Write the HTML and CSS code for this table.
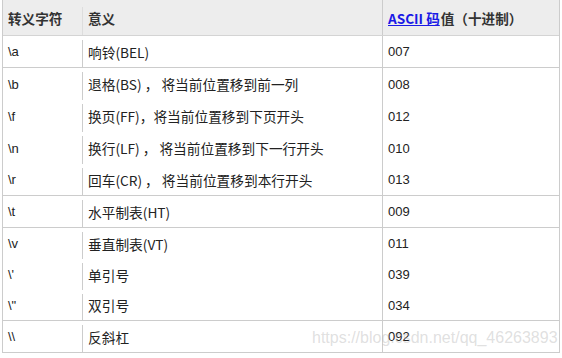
FILE: index.html
```html
<!DOCTYPE html>
<html lang="zh-CN">
<head>
    <meta charset="UTF-8">
    <title>转义字符</title>
    <link rel="stylesheet" href="styles.css">
</head>
<body>
    <div class="table">
        <div class="row head">
            <div class="c1">转义字符</div>
            <div class="sep"></div>
            <div class="c2">意义</div>
            <div class="c3"><a href="#">ASCII 码</a>值（十进制）</div>
        </div>
        <div class="row line">
            <div class="c1">\a</div><div class="sep"></div>
            <div class="c2">响铃(BEL)</div><div class="c3 num">007</div>
        </div>
        <div class="row">
            <div class="c1">\b</div><div class="sep"></div>
            <div class="c2">退格(BS) ， 将当前位置移到前一列</div><div class="c3 num">008</div>
        </div>
        <div class="row">
            <div class="c1">\f</div><div class="sep"></div>
            <div class="c2">换页(FF)，将当前位置移到下页开头</div><div class="c3 num">012</div>
        </div>
        <div class="row">
            <div class="c1">\n</div><div class="sep"></div>
            <div class="c2">换行(LF) ， 将当前位置移到下一行开头</div><div class="c3 num">010</div>
        </div>
        <div class="row line">
            <div class="c1">\r</div><div class="sep"></div>
            <div class="c2">回车(CR) ， 将当前位置移到本行开头</div><div class="c3 num">013</div>
        </div>
        <div class="row line">
            <div class="c1">\t</div><div class="sep"></div>
            <div class="c2">水平制表(HT)</div><div class="c3 num">009</div>
        </div>
        <div class="row short">
            <div class="c1">\v</div><div class="sep"></div>
            <div class="c2">垂直制表(VT)</div><div class="c3 num">011</div>
        </div>
        <div class="row short">
            <div class="c1">\'</div><div class="sep"></div>
            <div class="c2">单引号</div><div class="c3 num">039</div>
        </div>
        <div class="row short line">
            <div class="c1">\"</div><div class="sep"></div>
            <div class="c2">双引号</div><div class="c3 num">034</div>
        </div>
        <div class="row line">
            <div class="c1">\\</div><div class="sep"></div>
            <div class="c2">反斜杠</div><div class="c3 num">092</div>
        </div>
        <div class="mark">https://blog.csdn.net/qq_46263893</div>
    </div>
</body>
</html>
```

FILE: styles.css
```css
body {
    margin: 0;
    background: #ffffff;
    font-family: "Noto Sans CJK SC", "Liberation Sans", sans-serif;
    font-size: 13.7px;
    color: #222;
}
.table {
    position: relative;
    margin-left: 2px;
    width: 558px;
    box-sizing: border-box;
    border-left: 1px solid #cccccc;
    border-right: 1px solid #cccccc;
}
.row {
    display: grid;
    grid-template-columns: 79px 1px 299px 177px;
    height: 32px;
    box-sizing: border-box;
}
.row.short {
    height: 31px;
}
.line {
    border-bottom: 1px solid #cccccc;
}
.head {
    height: 36px;
    background-color: #ededed;
    border-bottom: 1px solid #d4d4d4;
    font-weight: bold;
    font-size: 13.6px;
    color: #333;
}
.c1, .c2, .c3 {
    display: flex;
    align-items: center;
    padding-left: 5px;
    white-space: nowrap;
}
.row .c1 {
    font-family: "Liberation Sans", sans-serif;
    font-size: 13px;
}
.head .c1 {
    font-family: "Noto Sans CJK SC", sans-serif;
    font-size: 13.6px;
}
.c3 {
    border-left: 1px solid #cccccc;
    box-sizing: border-box;
}
.num {
    font-family: "Liberation Sans", sans-serif;
    font-size: 13px;
}
.sep {
    margin-top: 4px;
    background-color: #cccccc;
}
.head .sep {
    margin-top: 7px;
    background-color: #dddddd;
}
.head a {
    color: #1a1ae6;
    text-decoration: underline;
    margin-right: 1px;
}
.mark {
    position: absolute;
    left: 309px;
    top: 329px;
    font-family: "Liberation Sans", sans-serif;
    font-size: 16px;
    color: rgba(175, 175, 175, 0.4);
    white-space: nowrap;
}
```
